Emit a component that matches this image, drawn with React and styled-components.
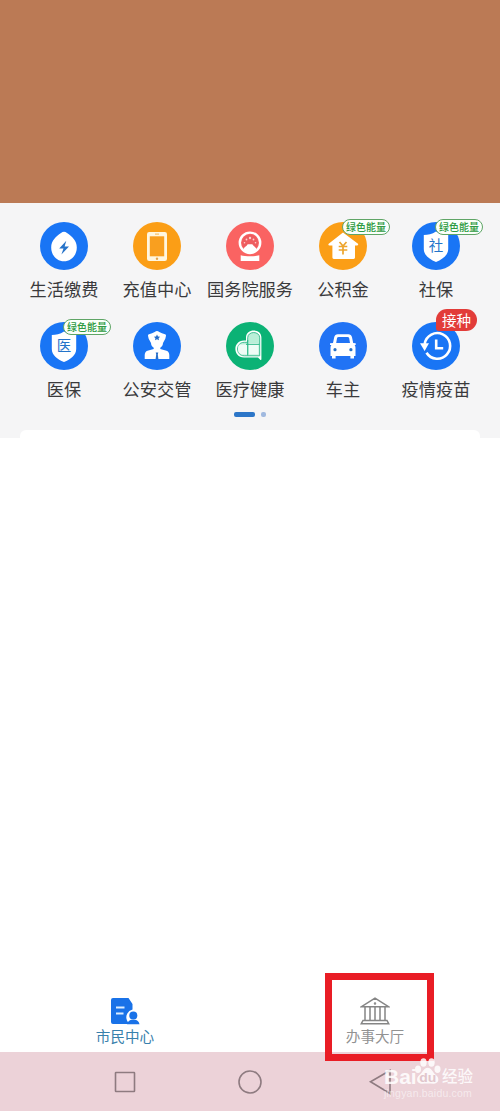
import React from 'react';
import styled, { createGlobalStyle } from 'styled-components';

const Global = createGlobalStyle`
  *{box-sizing:border-box}
  body{margin:0;background:#fff;font-family:"Noto Sans CJK SC","Noto Sans",sans-serif;overflow:hidden}
  svg{display:block}
`;
const Page = styled.main`
  width:500px;height:1111px;display:flex;flex-direction:column;position:relative;background:#fff;
`;
const Banner = styled.div`height:203px;background:#bb7a55;flex:none;`;
const Panel = styled.section`
  height:235px;flex:none;background:#f5f5f6;padding:19px 17.5px 0;display:flex;flex-direction:column;
`;
const Grid = styled.div`display:grid;grid-template-columns:repeat(5,93px);grid-auto-rows:100px;height:190px;`;
const Service = styled.div`display:flex;flex-direction:column;align-items:center;`;
const Disc = styled.div`
  position:relative;width:48px;height:48px;border-radius:50%;background:${p => p.$color};
`;
const Label = styled.span`
  font-size:17.2px;line-height:24px;margin-top:7px;color:#3a3a3c;white-space:nowrap;
`;
const EnergyBadge = styled.span`
  position:absolute;left:23px;top:-3px;width:48px;height:16px;border:1px solid #5fa566;border-radius:8px;
  background:#fbfffb;color:#2d9a41;font-size:10px;font-weight:500;line-height:14px;text-align:center;white-space:nowrap;
`;
const AlertBadge = styled.span`
  position:absolute;left:24px;top:-13px;width:41px;height:22px;border-radius:11px 11px 11px 3px;
  background:#e23c39;color:#fff;font-size:14.5px;line-height:21px;text-align:center;white-space:nowrap;
`;
const Dots = styled.div`display:flex;gap:6px;align-items:center;justify-content:center;height:5px;`;
const Dot = styled.i`
  width:${p => (p.$active ? 21 : 4.5)}px;height:4.5px;border-radius:2px;background:${p => (p.$active ? '#2c76c8' : '#a0b9df')};
`;
const CardTop = styled.div`height:8px;margin:auto 2.5px 0;border-radius:6px 6px 0 0;background:#fff;`;
const Content = styled.div`flex:1;`;
const Tabs = styled.nav`height:84px;flex:none;display:grid;grid-template-columns:1fr 1fr;`;
const Tab = styled.div`
  display:flex;flex-direction:column;align-items:center;padding-top:29px;color:${p => (p.$active ? '#3880ac' : '#929292')};
`;
const TabLabel = styled.span`font-size:14.6px;line-height:20px;`;
const Highlight = styled.div`
  position:absolute;left:325px;top:973px;width:109px;height:88px;border:7px solid #e91d25;
`;
const SystemBar = styled.footer`
  height:59px;flex:none;background:#ecd2d8;display:grid;grid-template-columns:repeat(3,125px);justify-content:center;
  justify-items:center;padding-top:17px;
`;
const Watermark = styled.div`
  position:absolute;left:384px;top:1056px;width:92px;color:#fff;opacity:.85;font-family:"Liberation Sans","Noto Sans CJK SC",sans-serif;
`;
const Brand = styled.div`display:flex;height:32px;align-items:flex-end;`;
const BrandLatin = styled.span`font-size:21px;font-weight:700;line-height:23px;width:30px;`;
const BrandHan = styled.span`font-size:15.5px;font-weight:500;line-height:25px;font-family:"Noto Sans CJK SC",sans-serif;`;
const Address = styled.div`font-size:10.5px;line-height:11px;letter-spacing:.2px;opacity:.65;white-space:nowrap;`;

const Svg = props => <svg width="48" height="48" viewBox="0 0 48 48" fill="#fff" {...props} />;

const Shield = ({ char }) => (
  <Svg>
    <path d="M24 9.500C20 12.300 16 13 11.800 13v14c0 6 5.500 10.300 12.200 13 6.700-2.700 12.200-7 12.200-13V13C32 13 28 12.300 24 9.500Z" />
    <text x="24" y="29" fontSize="14.500" fontWeight="400" textAnchor="middle" fill="#2374ca">{char}</text>
  </Svg>
);
const icons = {
  drop: (
    <Svg>
      <path d="M24 9.700q1.500 0 3 1.300c5 3.500 9.800 7.700 9.800 14.500C36.800 33.500 31 39.300 24 39.300S11.200 33.500 11.200 25.500c0-6.800 4.800-11 9.800-14.500q1.500-1.300 3-1.300Z" />
      <path fill="#2673c9" d="M26.300 18.700 19.200 26.600h4.300l-2.100 6 7.600-8.200h-4.400Z" />
    </Svg>
  ),
  phone: (
    <Svg>
      <rect x="14" y="10" width="20" height="29" rx="2.200" fill="#fff6df" />
      <rect x="16.800" y="14.300" width="14.400" height="20" fill="#f99f1f" />
      <path d="M22 12.100h4" stroke="#f6b650" strokeWidth="1" />
      <circle cx="24" cy="36.700" r="1.200" fill="#e7a44a" />
    </Svg>
  ),
  emblem: (
    <Svg>
      <circle cx="24" cy="20.800" r="10.200" fill="none" stroke="#fff" strokeWidth="2.400" />
      <circle cx="24" cy="20.800" r="8" fill="#ee5c5f" />
      <path d="M17 27.500c1-2.500 3.500-3 4.700-5.200h4.600c1.200 2.200 3.700 2.700 4.700 5.200l-3 3h-8Z" />
      <g fill="#ffd0cd"><circle cx="24" cy="16" r="1.200" /><circle cx="20.500" cy="17.500" r=".9" /><circle cx="27.500" cy="17.500" r=".9" /><circle cx="18.500" cy="20.800" r=".8" /><circle cx="29.500" cy="20.800" r=".8" /></g>
      <path d="M14.700 33.200c5 1.500 13.600 1.500 18.600 0v5.700H14.700Z" />
    </Svg>
  ),
  house: (
    <Svg>
      <path d="M24 10.500 39 21.700q.8 1.800-1.200 1.800H36V35.500q0 1.400-1.400 1.400H14.800q-1.400 0-1.400-1.400V23.500h-2.800q-1.900 0-.9-1.800Z" />
      <path fill="none" stroke="#eda52e" strokeWidth="1.700" d="m20.500 20 3.500 4 3.500-4M19.700 24.500h8.600M19.700 28h8.600M24 24v8.500" />
    </Svg>
  ),
  social: <Shield char="社" />,
  medical: <Shield char="医" />,
  police: (
    <Svg>
      <path d="M24 9q1 0 2.300 1 2.500 1.500 5.700 2.300 1.200.3 1 1.500l-.7 3-2.300 4.200c-.1 2-.9 3.600-2.700 4.700v1.300l6.200 1.700q2.600.7 2.800 4.300v4H11.700v-4q.2-3.600 2.800-4.300l6.200-1.700v-1.300c-1.800-1.100-2.600-2.700-2.700-4.700l-2.300-4.200-.7-3q-.2-1.200 1-1.500 3.200-.8 5.700-2.300 1.300-1 2.300-1Z" />
      <path fill="#286fca" d="m24 12.500 1 1.900 2.100.3-1.500 1.500.4 2.100-2-1-2 1 .4-2.100-1.500-1.500 2.100-.3ZM22.700 30.500h2.600l-.5 2 .6 4.500h-2.800l.6-4.500Z" />
    </Svg>
  ),
  heart: (
    <Svg>
      <path d="M20 18.600v-3c0-9.500 15.400-9.500 15.400 0v21.700q0 .9-.9.600L32 35.500H18C6.500 35.500 6.500 18.600 18 18.600Z" />
      <path fill="#b9efd8" stroke="#31b889" strokeWidth=".9" d="M21.700 20.300v-4.500c0-7 12-7 12 0v18H18.300c-9 0-9-13.500 0-13.500Z" />
      <path fill="#effcf6" d="M22.800 21h9.700v11.600h-9.700ZM14 22.500h7v10.100h-5q-4-1-4-5.500 0-3.800 2-4.600Z" />
      <path fill="none" stroke="#24b684" strokeWidth="1" d="M21.700 18v15.500M20 22.300h13.500" />
    </Svg>
  ),
  car: (
    <Svg>
      <path fillRule="evenodd" d="m14 21 1.200-5.700q.7-3 3.600-3h10.600q2.900 0 3.600 3l1.200 5.700 2.500.3v1.800h-1.100q.9 1 .9 2.700v8.200H35v2.600h-3.600V34H16.600v2.600H13V34h-1.500v-8.200q0-1.700.9-2.700H11v-1.800Zm3.200 0h13.800l-.8-4.700q-.3-1.300-1.700-1.300h-8.800q-1.400 0-1.700 1.300Z" />
      <circle cx="16" cy="27.700" r="1.600" fill="#2670c4" /><circle cx="31.900" cy="27.700" r="1.600" fill="#2670c4" />
    </Svg>
  ),
  clock: (
    <Svg>
      <g fill="none" stroke="#fff" strokeWidth="2.600"><path d="M12.700 22a12.800 12.800 0 1 1 1.800 8.700" /><path d="M24.200 17.500v8.800h7" /></g>
      <path d="M8 21.300h9l-4.400 7.800Z" />
    </Svg>
  ),
};

const services = [
  ['drop', '生活缴费', '#1975f5'],
  ['phone', '充值中心', '#fb9e16'],
  ['emblem', '国务院服务', '#fa6362'],
  ['house', '公积金', '#fb9e16', 'energy'],
  ['social', '社保', '#1975f5', 'energy'],
  ['medical', '医保', '#1975f5', 'energy'],
  ['police', '公安交管', '#1975f5'],
  ['heart', '医疗健康', '#0bb275'],
  ['car', '车主', '#2173f5'],
  ['clock', '疫情疫苗', '#1975f5', 'alert'],
];

const CitizenIcon = () => (
  <svg width="30" height="29" viewBox="0 0 30 29" fill="#1972e8">
    <path d="M3 1h15.500l4 6v5.500A8 8 0 0 0 17 23.500L19 27H3q-2 0-2-2V3q0-2 2-2Z" />
    <path stroke="#dcedff" strokeWidth="2" d="M6 10.500h8.500M6 16.500h7.500" />
    <circle cx="23.300" cy="18.500" r="4" />
    <path d="M17 27.300q1-4 4.500-4.500h3.600q3.600.5 4.400 4.500Z" />
  </svg>
);
const HallIcon = () => (
  <svg width="30" height="29" viewBox="0 0 30 29" fill="none" stroke="#858585" strokeWidth="1.500">
    <path d="M15 1.200 28.500 9.700H1.500ZM5 10v13.500M10 10v13.500M15 10v13.500M20 10v13.500M25 10v13.500M3 23.500h24l1.800 3.300H1.200Z" />
    <circle cx="15" cy="6.500" r=".5" />
  </svg>
);
const Paw = () => (
  <svg width="28" height="32" viewBox="0 0 28 34" preserveAspectRatio="none" fill="#fff">
    <ellipse cx="4" cy="14" rx="3" ry="4" /><ellipse cx="9.500" cy="6.800" rx="3.200" ry="4.500" />
    <ellipse cx="17.500" cy="6.800" rx="3.200" ry="4.500" /><ellipse cx="23.500" cy="14" rx="3" ry="4" />
    <path d="M13.700 12.500c4 0 4.500 4.500 8 7.500 5 4.300 2.300 10-2.500 9.500-4-.4-7-.4-11 0C3.400 30 .8 24.300 5.700 20c3.500-3 4-7.500 8-7.500Z" />
    <text x="13.800" y="27.500" textAnchor="middle" fontFamily="Liberation Sans, sans-serif" fontSize="14" fontWeight="700" fill="#dfc4ca">du</text>
  </svg>
);

export default function App() {
  return (
    <Page>
      <Global />
      <Banner />
      <Panel>
        <Grid>
          {services.map(([icon, name, color, badge]) => (
            <Service key={icon}>
              <Disc $color={color}>
                {icons[icon]}
                {badge === 'energy' && <EnergyBadge>绿色能量</EnergyBadge>}
                {badge === 'alert' && <AlertBadge>接种</AlertBadge>}
              </Disc>
              <Label>{name}</Label>
            </Service>
          ))}
        </Grid>
        <Dots><Dot $active /><Dot /></Dots>
        <CardTop />
      </Panel>
      <Content />
      <Tabs>
        <Tab $active><CitizenIcon /><TabLabel>市民中心</TabLabel></Tab>
        <Tab><HallIcon /><TabLabel>办事大厅</TabLabel></Tab>
      </Tabs>
      <SystemBar>
        <svg width="26" height="26" viewBox="0 0 26 26" fill="none" stroke="#8e7b80" strokeWidth="1.600"><rect x="3.500" y="3.500" width="19" height="19" rx=".5" /></svg>
        <svg width="26" height="26" viewBox="0 0 26 26" fill="none" stroke="#8e7b80" strokeWidth="1.600"><circle cx="13" cy="13" r="11" /></svg>
        <svg width="36" height="26" viewBox="0 0 36 26" fill="none" stroke="#8e7b80" strokeWidth="1.600"><path d="M33 1.500v23L13.500 12.800Z" /></svg>
      </SystemBar>
      <Highlight />
      <Watermark>
        <Brand><BrandLatin>Bai</BrandLatin><Paw /><BrandHan>经验</BrandHan></Brand>
        <Address>jingyan.baidu.com</Address>
      </Watermark>
    </Page>
  );
}
